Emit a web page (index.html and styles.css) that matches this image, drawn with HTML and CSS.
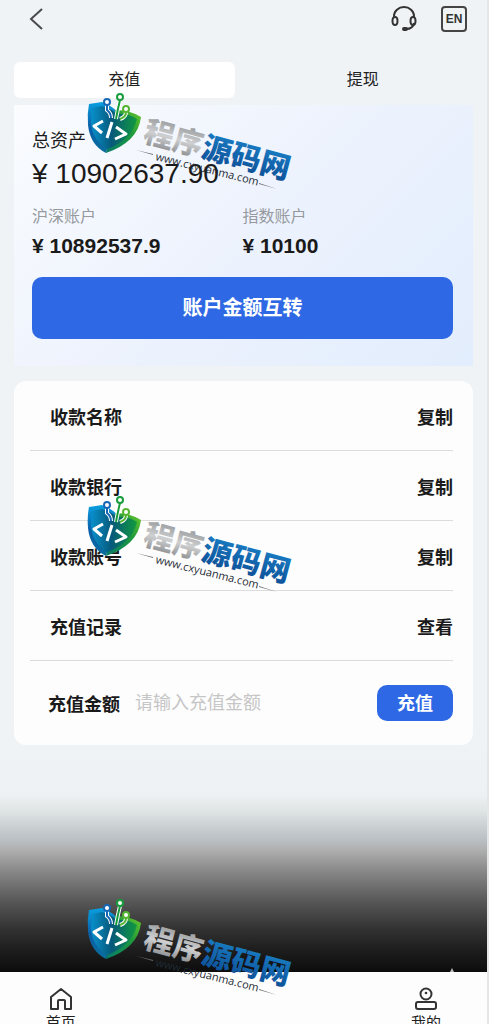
FILE: index.html
```
<!DOCTYPE html>
<html lang="zh-CN">
<head>
	<meta charset="UTF-8">
	<meta name="viewport" content="width=device-width, initial-scale=1">
	<title>充值</title>
	<link rel="stylesheet" href="styles.css">
</head>
<body>
	<svg class="defs" width="0" height="0" aria-hidden="true">
		<defs>
			<linearGradient id="shieldL" x1="0" y1="0" x2="0" y2="1">
				<stop offset="0" stop-color="#0aa0e0"/>
				<stop offset=".5" stop-color="#0a5fa8"/>
				<stop offset="1" stop-color="#0b6d9c"/>
			</linearGradient>
			<linearGradient id="shieldR" x1="1" y1="0" x2="0" y2="1">
				<stop offset="0" stop-color="#6cc82a"/>
				<stop offset=".4" stop-color="#1f9a3c"/>
				<stop offset="1" stop-color="#067a6a"/>
			</linearGradient>
			<linearGradient id="shieldIn" x1="0" y1="0" x2="1" y2="0">
				<stop offset="0" stop-color="#0890cc"/>
				<stop offset=".45" stop-color="#06597a"/>
				<stop offset="1" stop-color="#119a3e"/>
			</linearGradient>
			<linearGradient id="silver" x1="0" y1="0" x2="0" y2="1">
				<stop offset="0" stop-color="#85878a"/>
				<stop offset=".3" stop-color="#a9abad"/>
				<stop offset=".55" stop-color="#cfd0d2"/>
				<stop offset="1" stop-color="#77797c"/>
			</linearGradient>
			<linearGradient id="blue" x1="0" y1="0" x2="0" y2="1">
				<stop offset="0" stop-color="#1c86cc"/>
				<stop offset="1" stop-color="#0b4a92"/>
			</linearGradient>
			<symbol id="mark" viewBox="0 0 220 105">
				<path fill="url(#shieldL)" d="M9 14L22 12Q34 17 37 22L26 63Q10 55 8 35Q7 24 9 14Z"/>
				<path fill="url(#shieldR)" d="M35 20Q50 20 61 27Q58 52 26 63Z"/>
				<path fill="url(#shieldIn)" d="M12 18L22 16Q34 20 36 24Q48 23 57 29Q52 50 27 59Q12 50 11 32Z"/>
				<g fill="none" stroke="#fff">
					<path stroke-width="4" d="M27 15V20Q31 23 31 28M40 10Q38 18 36 29M46 22Q46 27 40 29"/>
					<path stroke-width="3" stroke-linejoin="round" d="M23 31L14 36L22 43M32 32L27 48M36 37L46 44L35 49"/>
				</g>
				<g fill="none" stroke-width="2">
					<path stroke="#1767b5" d="M27 15V20Q31 23 31 28"/>
					<path stroke="#189c3c" d="M40 10Q38 18 36 29"/>
					<path stroke="#53b431" d="M46 22Q46 27 40 29"/>
					<circle cx="27" cy="12" r="3" fill="#fff" stroke="#1767b5"/>
					<circle cx="40" cy="7" r="3" fill="#fff" stroke="#189c3c"/>
					<circle cx="46" cy="19" r="3" fill="#fff" stroke="#53b431"/>
				</g>
				<g transform="translate(62 51) rotate(15)">
					<text class="mark-name" fill="url(#silver)" x="0" y="0">程序</text>
					<text class="mark-name" fill="url(#blue)" x="60" y="0">源码网</text>
				</g>
				<g transform="translate(75 70) rotate(14)">
					<text class="mark-url" x="0" y="0">www.cxyuanma.com</text>
				</g>
				<path fill="#6c7074" d="M56 60L73 64V65ZM179 93L197 99L179 94Z"/>
			</symbol>
		</defs>
	</svg>

	<div class="page">
		<header class="top">
			<button type="button" class="icon-btn" aria-label="返回">
				<svg width="24" height="26" viewBox="0 0 24 26" fill="none" stroke="#4a4a4c" stroke-width="2"><path d="M18 3L7 13L18 23"/></svg>
			</button>
			<div class="top-right">
				<button type="button" class="icon-btn" aria-label="客服">
					<svg width="26" height="26" viewBox="0 0 26 26" fill="none" stroke="#333" stroke-width="2">
						<path d="M3 12V10A10 9 0 0 1 23 10V12M23 17Q22 23 15 23"/>
						<ellipse cx="4" cy="15" rx="2.5" ry="4"/>
						<ellipse cx="22" cy="15" rx="2.5" ry="4"/>
						<rect x="12" y="22" width="4" height="2" rx="1" fill="#333"/>
					</svg>
				</button>
				<button type="button" class="icon-btn lang">EN</button>
			</div>
		</header>

		<nav class="tabs">
			<button type="button" class="tab on">充值</button>
			<button type="button" class="tab">提现</button>
		</nav>

		<section class="asset">
			<p class="asset-title">总资产</p>
			<p class="asset-total">¥ 10902637.90</p>
			<div class="accounts">
				<div>
					<p class="acc-name">沪深账户</p>
					<p class="acc-num">¥ 10892537.9</p>
				</div>
				<div>
					<p class="acc-name">指数账户</p>
					<p class="acc-num">¥ 10100</p>
				</div>
			</div>
			<button type="button" class="transfer">账户金额互转</button>
		</section>

		<section class="pay">
			<div class="row"><span>收款名称</span><button type="button" class="act">复制</button></div>
			<div class="row"><span>收款银行</span><button type="button" class="act">复制</button></div>
			<div class="row"><span>收款账号</span><button type="button" class="act">复制</button></div>
			<div class="row"><span>充值记录</span><button type="button" class="act">查看</button></div>
			<form class="amount">
				<label for="money">充值金额</label>
				<input type="text" id="money" placeholder="请输入充值金额">
				<button type="button" class="submit">充值</button>
			</form>
		</section>

		<div class="fade"></div>

		<nav class="bottom">
			<a href="#" class="item">
				<svg width="24" height="24" viewBox="0 0 24 24" fill="none" stroke="#333" stroke-width="2" stroke-linejoin="round"><path d="M2 10L12 2L22 10V22H16V14Q16 13 15 13H10Q9 13 9 14V22H2Z"/></svg>
				<span>首页</span>
			</a>
			<a href="#" class="item item-my">
				<svg width="24" height="24" viewBox="0 0 24 24" fill="none" stroke="#333" stroke-width="2"><circle cx="12" cy="7" r="5.5"/><rect x="2" y="15" width="20" height="7" rx="2"/><circle cx="12" cy="6" r="1.3" fill="#333" stroke="none"/></svg>
				<span>我的</span>
			</a>
		</nav>
	</div>

	<svg class="mark mark1" width="220" height="105" aria-hidden="true"><use href="#mark"/></svg>
	<svg class="mark mark2" width="220" height="105" aria-hidden="true"><use href="#mark"/></svg>
	<svg class="mark mark3" width="220" height="105" aria-hidden="true"><use href="#mark"/></svg>
</body>
</html>
```
FILE: styles.css
```
* {
	box-sizing: border-box;
	margin: 0;
	padding: 0;
}

body {
	position: relative;
	font-family: "Liberation Sans", "Noto Sans CJK SC", sans-serif;
	font-size: 18px;
	color: #1a1a1a;
	background: #fff;
}

button,
input {
	font: inherit;
	color: inherit;
	border: 0;
	background: none;
}

button {
	cursor: pointer;
}

.defs {
	position: absolute;
}

.page {
	display: flex;
	flex-direction: column;
	min-height: 100vh;
	margin-right: 1px;
	border-right: 2px solid #e4e7e9;
	background: #eff3f6;
}

/* header */
.top {
	display: flex;
	justify-content: space-between;
	align-items: center;
	height: 38px;
	padding: 0 20px 0 24px;
}

.top-right {
	display: flex;
	gap: 24px;
}

.icon-btn {
	display: flex;
	align-items: center;
	justify-content: center;
}

.lang {
	width: 26px;
	height: 26px;
	border: 2px solid #444;
	border-radius: 4px;
	font-size: 12px;
	font-weight: bold;
	color: #333;
}

/* tabs */
.tabs {
	display: grid;
	grid-template-columns: 1fr 1fr;
	gap: 18px;
	margin: 24px 14px 7px;
}

.tab {
	height: 36px;
	padding-bottom: 4px;
	border-radius: 6px;
	font-size: 16px;
	color: #222;
}

.tab.on {
	background: #fff;
}

/* asset card */
.asset {
	margin: 0 14px;
	padding: 24px 20px 27px 18px;
	background: linear-gradient(135deg, #fafcfe 0%, #eef3fd 45%, #e2edfd 100%);
}

.asset-title {
	line-height: 24px;
}

.asset-total {
	font-size: 28px;
	line-height: 42px;
}

.accounts {
	display: grid;
	grid-template-columns: 1fr 1fr;
	margin: 10px 0 14px;
}

.acc-name {
	font-size: 16px;
	line-height: 24px;
	color: #969a9f;
}

.acc-num {
	font-size: 21px;
	font-weight: bold;
	line-height: 34px;
}

.transfer {
	width: 100%;
	height: 62px;
	padding-bottom: 4px;
	border-radius: 10px;
	font-size: 20px;
	font-weight: bold;
	color: #fff;
	background: #2e68e4;
}

/* pay card */
.pay {
	margin: 15px 14px 0;
	padding: 0 20px 0 16px;
	border-radius: 12px;
	background: #fdfdfd;
}

.row {
	display: flex;
	justify-content: space-between;
	align-items: center;
	height: 70px;
	padding-left: 20px;
	border-bottom: 1px solid #dcdcdc;
	font-weight: bold;
}

.amount {
	display: flex;
	align-items: center;
	height: 84px;
	padding-left: 18px;
}

.amount label {
	font-weight: bold;
}

.amount input {
	flex: 1;
	min-width: 0;
	margin-left: 15px;
	outline: none;
}

.amount input::placeholder {
	color: #c6c6c6;
}

.submit {
	width: 76px;
	height: 36px;
	padding-bottom: 2px;
	border-radius: 10px;
	font-weight: bold;
	color: #fff;
	background: #2e68e4;
}

.fade {
	flex: 1;
	background: linear-gradient(#eff3f6 0%, #edf1f3 22%, #dfe4e5 29%, #b9bfc2 42%, #b0b0b0 46%, #8a8a8a 55%, #5a5a5a 68%, #323232 81%, #1e1e1e 90%, #0c0c0c 100%);
}

/* bottom bar */
.bottom {
	display: flex;
	justify-content: space-between;
	height: 52px;
	background: #fdfdfd;
}

.item {
	position: relative;
	display: flex;
	flex-direction: column;
	align-items: center;
	width: 25%;
	height: 52px;
	padding-top: 15px;
	clip-path: inset(-8px 0 0 0);
	font-size: 15px;
	line-height: 24px;
	color: #222;
	text-decoration: none;
}

.item svg {
	flex-shrink: 0;
}

/* small arrow on the bar's edge */
.item-my::before {
	content: "";
	position: absolute;
	top: -4px;
	right: 33px;
	border: 2px solid transparent;
	border-top: 0;
	border-bottom: 4px solid #bbb;
}

/* watermark */
.mark {
	position: absolute;
	left: 80px;
	pointer-events: none;
}

.mark1 {
	top: 90px;
}

.mark2 {
	top: 493px;
}

.mark3 {
	top: 896px;
}

.mark-name {
	font-family: "Noto Sans CJK SC", sans-serif;
	font-size: 30px;
	font-weight: 900;
}

.mark-url {
	font-family: "Open Sans", sans-serif;
	font-size: 11px;
	fill: #1f2b33;
}
```
